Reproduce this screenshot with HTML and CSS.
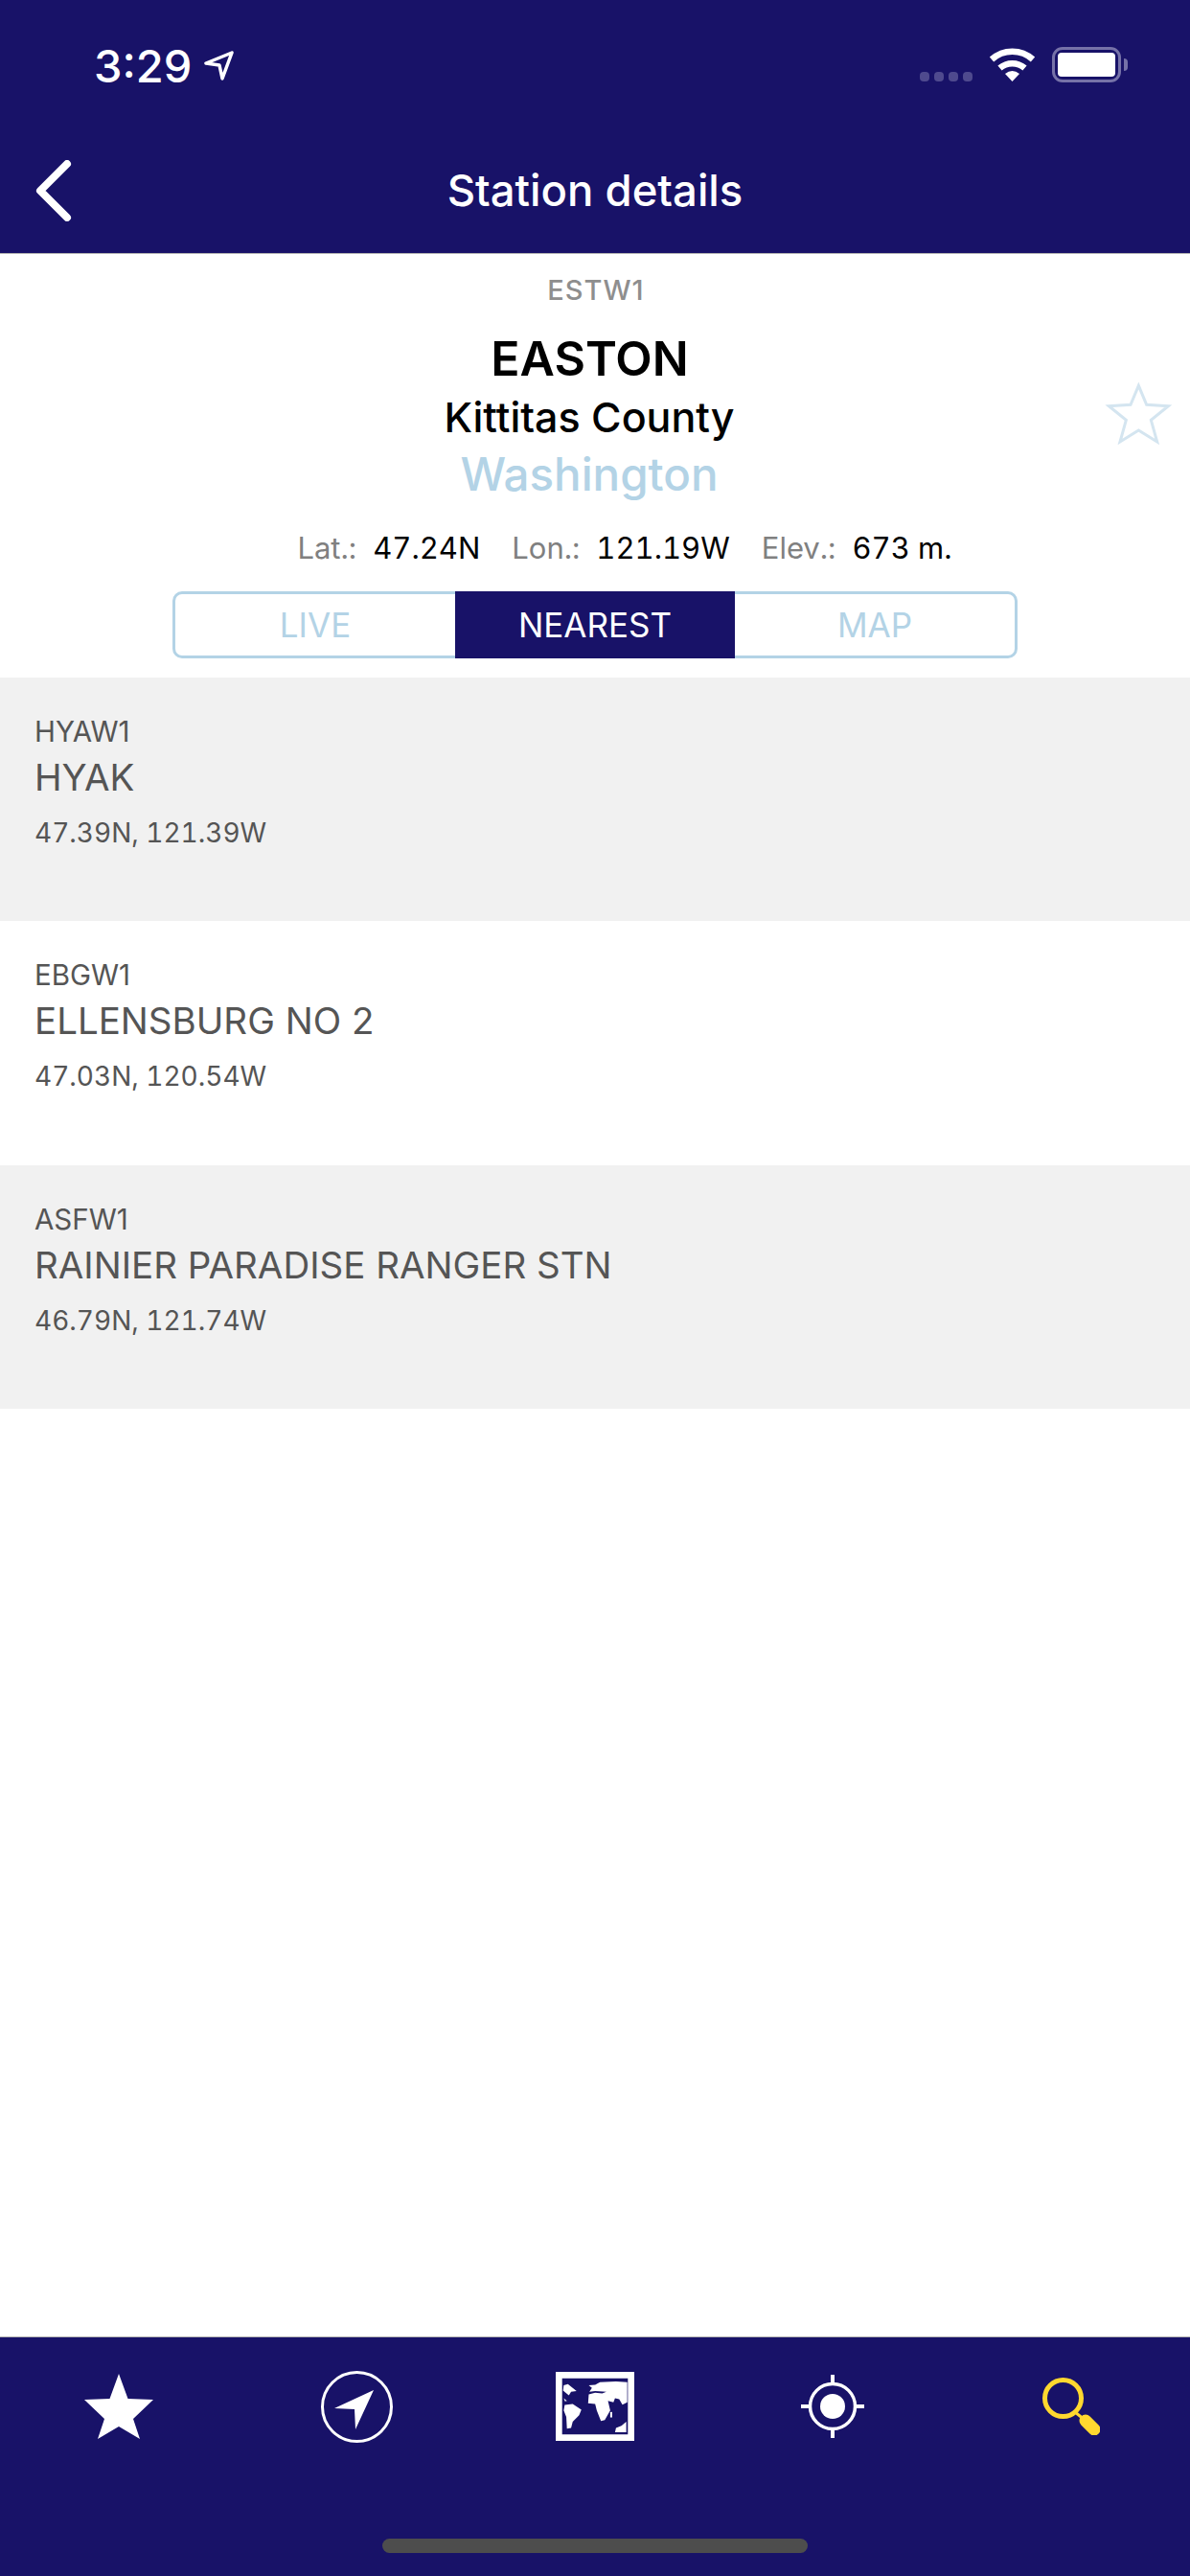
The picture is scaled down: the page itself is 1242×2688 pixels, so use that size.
FILE: index.html
```html
<!DOCTYPE html>
<html lang="en">
<head>
    <meta charset="UTF-8">
    <meta name="viewport" content="width=device-width, initial-scale=1.0">
    <title>Station details</title>
    <link rel="stylesheet" href="styles.css">
</head>
<body>
    <header class="header">
        <div class="status-bar">
            <div class="status-time">
                <span>3:29</span>
                <svg class="status-arrow" viewBox="0 0 31 33"><polygon points="29,3 2,14 16,16 19,30"/></svg>
            </div>
            <div class="status-icons">
                <div class="signal"><i></i><i></i><i></i><i></i></div>
                <svg class="wifi" viewBox="0 0 49 36">
                    <path class="wifi-arc" d="M3 13 A 32 32 0 0 1 46 13"/>
                    <path class="wifi-arc" d="M11.5 22 A 20 20 0 0 1 37.5 22"/>
                    <path class="wifi-fan" d="M17 28 Q24.5 22 32 28 L24.5 36 Z"/>
                </svg>
                <div class="battery"><div class="battery-fill"></div></div>
            </div>
        </div>
        <div class="nav">
            <svg class="back" viewBox="0 0 38 64"><polyline points="33,4 5,32 33,60"/></svg>
            <h1>Station details</h1>
        </div>
    </header>

    <main class="main">
        <section class="station">
            <div class="station-code">ESTW1</div>
            <div class="station-name">EASTON</div>
            <div class="station-county">Kittitas County</div>
            <div class="station-state">Washington</div>
            <svg class="fav" viewBox="0 0 300 270"><polygon points="145,52 170,112 238,116 184,160 203,228 145,192 87,228 106,160 52,116 120,112"/></svg>
            <div class="stats">
                <span class="stat-label">Lat.:</span><span class="stat-value">47.24N</span>
                <span class="stat-label">Lon.:</span><span class="stat-value">121.19W</span>
                <span class="stat-label">Elev.:</span><span class="stat-value">673 m.</span>
            </div>
            <div class="segment">
                <div class="segment-item">LIVE</div>
                <div class="segment-item active">NEAREST</div>
                <div class="segment-item">MAP</div>
            </div>
        </section>

        <section class="list">
            <div class="row">
                <div class="row-code">HYAW1</div>
                <div class="row-name">HYAK</div>
                <div class="row-coords">47.39N, 121.39W</div>
            </div>
            <div class="row">
                <div class="row-code">EBGW1</div>
                <div class="row-name">ELLENSBURG NO 2</div>
                <div class="row-coords">47.03N, 120.54W</div>
            </div>
            <div class="row">
                <div class="row-code">ASFW1</div>
                <div class="row-name">RAINIER PARADISE RANGER STN</div>
                <div class="row-coords">46.79N, 121.74W</div>
            </div>
        </section>
    </main>

    <footer class="tabbar">
        <nav class="tabs">
            <div class="tab">
                <svg class="icon-star" viewBox="0 0 72 68"><polygon points="36,0 45.5,26 72,27 51,47 58,68 36,55 14,68 21,47 0,27 26.5,26"/></svg>
            </div>
            <div class="tab">
                <svg class="icon-compass" viewBox="0 0 75 75">
                    <circle cx="37.5" cy="37.5" r="36"/>
                    <polygon points="55,20 14,39 35,40 36,61"/>
                </svg>
            </div>
            <div class="tab">
                <svg class="icon-map" viewBox="27 30 245 215">
                    <path class="map-frame" d="M27 30H272V245H27Z M47 50V225H252V50Z"/>
                    <path d="M52 72L65 68L92 90L75 92L68 103L58 95L50 88Z"/>
                    <path d="M52 112L62 120L56 122Z"/>
                    <path d="M55 133L80 130L107 148L100 165L80 185L75 205L62 207L60 170L52 150Z"/>
                    <path d="M130 72L150 70L165 62L215 60L250 62L250 125L235 132L225 115L212 112L207 125L190 120L197 150L180 180L168 183L155 150L150 130L128 128L130 100L150 95L172 97L185 92L150 90L132 92L140 80Z"/>
                    <path d="M197 155L203 155L203 172L197 172Z"/>
                    <path d="M247 185L247 218L212 218L215 205L232 198Z"/>
                </svg>
            </div>
            <div class="tab">
                <svg class="icon-target" viewBox="0 0 66 66">
                    <circle class="target-ring" cx="33" cy="33" r="23.5"/>
                    <circle cx="33" cy="33" r="13"/>
                    <rect x="31" y="0" width="4" height="9"/>
                    <rect x="31" y="57" width="4" height="9"/>
                    <rect x="0" y="31" width="9" height="4"/>
                    <rect x="57" y="31" width="9" height="4"/>
                </svg>
            </div>
            <div class="tab">
                <svg class="icon-search" viewBox="0 0 60 60">
                    <circle class="search-ring" cx="21.5" cy="21.5" r="19"/>
                    <line class="search-neck" x1="34" y1="36" x2="44" y2="44"/>
                    <line class="search-handle" x1="45" y1="45" x2="54" y2="54"/>
                </svg>
            </div>
        </nav>
        <div class="home-indicator"></div>
    </footer>
</body>
</html>
```

FILE: styles.css
```css
body {
    font-family: Inter, 'Liberation Sans', sans-serif;
    margin: 0;
    min-height: 2688px;
    display: flex;
    flex-direction: column;
    background-color: #fff;
    color: #000;
}
svg {
    display: block;
}

/* Header */
.header {
    background-color: #181268;
    color: #fff;
    height: 264px;
    border-bottom: 1px solid #b2b2b2;
}
.status-bar {
    height: 138px;
    display: flex;
    justify-content: space-between;
    padding: 0 72px 0 98px;
}
.status-time {
    display: flex;
    gap: 13px;
    margin-top: 46px;
    height: 45px;
    font-size: 47px;
    line-height: 45px;
    font-weight: 500;
}
.status-arrow {
    width: 31px;
    height: 33px;
    margin-top: 6px;
    fill: none;
    stroke: #fff;
    stroke-width: 3.5;
    stroke-linejoin: round;
}
.status-icons {
    display: flex;
    margin-top: 49px;
}
.signal {
    display: flex;
    gap: 5px;
    margin-top: 26px;
    margin-right: 17px;
}
.signal i {
    width: 10px;
    height: 10px;
    border-radius: 4px;
    background-color: #4f4a8e;
}
.wifi {
    width: 49px;
    height: 36px;
    margin-right: 17px;
}
.wifi-arc {
    fill: none;
    stroke: #fff;
    stroke-width: 6.5;
}
.wifi-fan {
    fill: #fff;
}
.battery {
    position: relative;
    box-sizing: border-box;
    width: 72px;
    height: 37px;
    padding: 3px;
    border: 3px solid #7672a8;
    border-radius: 11px;
}
.battery::after {
    content: "";
    position: absolute;
    top: 9px;
    right: -10px;
    width: 4px;
    height: 13px;
    border-radius: 0 7px 7px 0;
    background-color: #7672a8;
}
.battery-fill {
    height: 100%;
    border-radius: 4px;
    background-color: #fff;
}
.nav {
    position: relative;
    display: flex;
    align-items: center;
    justify-content: center;
    height: 126px;
    margin-top: -2px;
}
.nav h1 {
    margin: 0;
    font-size: 45.5px;
    font-weight: 500;
    line-height: 56px;
}
.back {
    position: absolute;
    left: 37px;
    top: 31px;
    width: 38px;
    height: 64px;
    fill: none;
    stroke: #fff;
    stroke-width: 8;
    stroke-linecap: round;
    stroke-linejoin: round;
}

/* Station block */
.main {
    flex: 1;
}
.station {
    position: relative;
    padding: 18px 0 20px;
    text-align: center;
}
.station-code {
    font-size: 29px;
    font-weight: 500;
    line-height: 40px;
    letter-spacing: 1px;
    color: #8e8e8e;
    padding-left: 2px;
}
.station-name {
    margin-top: 23px;
    padding-right: 11px;
    font-size: 50px;
    font-weight: 600;
    line-height: 56px;
}
.station-county {
    margin-top: 11px;
    padding-right: 12px;
    font-size: 43px;
    font-weight: 500;
    line-height: 44px;
}
.station-state {
    margin-top: 13px;
    padding-right: 12px;
    font-size: 47.5px;
    font-weight: 500;
    line-height: 50px;
    color: #b3d3e6;
}
.fav {
    position: absolute;
    top: 120px;
    right: 0;
    width: 100px;
    height: 90px;
    margin-right: 2px;
    fill: none;
    stroke: #d4e5f0;
    stroke-width: 9;
}
.stats {
    display: flex;
    justify-content: center;
    margin-top: 32px;
    padding-left: 62px;
    font-size: 31px;
    line-height: 40px;
    font-variant-numeric: tabular-nums;
}
.stat-label {
    color: #808080;
    margin-right: 17px;
}
.stat-value {
    margin-right: 33px;
}
.stat-value:last-child {
    margin-right: 0;
}
.segment {
    box-sizing: border-box;
    display: flex;
    width: 882px;
    height: 70px;
    margin: 25px 0 0 180px;
    border: 3px solid #b3d3e6;
    border-radius: 10px;
}
.segment-item {
    flex: 1;
    font-size: 35px;
    line-height: 64px;
    color: #b3d3e6;
}
.segment-item.active {
    margin: -3px 0;
    line-height: 70px;
    background-color: #181268;
    color: #fff;
}

/* Nearest stations */
.row {
    box-sizing: border-box;
    height: 254.33px;
    padding: 38px 36px 0;
    color: #555;
}
.row:nth-child(odd) {
    background-color: #f1f1f1;
}
.row-code {
    font-size: 29.5px;
    line-height: 36px;
}
.row-name {
    margin-top: 7px;
    font-size: 38.5px;
    line-height: 46px;
}
.row-coords {
    margin-top: 17px;
    font-size: 28px;
    line-height: 36px;
    font-variant-numeric: tabular-nums;
}

/* Tab bar */
.tabbar {
    box-sizing: border-box;
    height: 250px;
    background-color: #181268;
    border-top: 1px solid #b2b2b2;
}
.tabs {
    display: flex;
    height: 144px;
}
.tab {
    flex: 1;
    display: flex;
    align-items: center;
    justify-content: center;
}
.tab svg {
    fill: #fff;
}
.icon-star {
    width: 72px;
    height: 68px;
}
.icon-compass {
    width: 75px;
    height: 75px;
}
.icon-compass circle {
    fill: none;
    stroke: #fff;
    stroke-width: 3;
}
.icon-map {
    width: 82px;
    height: 72px;
}
.map-frame {
    fill-rule: evenodd;
}
.icon-target {
    width: 66px;
    height: 66px;
}
.target-ring {
    fill: none;
    stroke: #fff;
    stroke-width: 3.5;
}
.icon-search {
    width: 60px;
    height: 60px;
}
.search-ring {
    fill: none;
    stroke: #ffd82f;
    stroke-width: 5;
}
.search-neck {
    stroke: #ffd82f;
    stroke-width: 3;
}
.search-handle {
    stroke: #ffd82f;
    stroke-width: 13;
    stroke-linecap: round;
}
.home-indicator {
    width: 444px;
    height: 15px;
    margin: 66px auto 0;
    border-radius: 8px;
    background-color: #4d4d4d;
}
```
